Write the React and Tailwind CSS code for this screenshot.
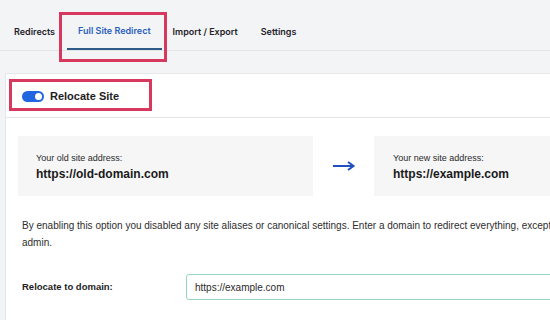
import React from "react";

export default function App() {
  const font = { fontFamily: "'Liberation Sans', Arial, sans-serif" };
  const tabFont = { fontFamily: "Inter, 'Liberation Sans', Arial, sans-serif" };
  return (
    <div className="relative w-[550px] h-[320px] overflow-hidden bg-[#f3f4f6] text-[#1e1e1e]" style={font}>
      {/* Tabs header */}
      <div className="h-[51px] border-b border-[#e4e5e7] flex items-end pl-[14px]" style={tabFont}>
        <div className="h-[50px] flex items-center pt-[14px] pr-[12px] text-[9px] font-semibold text-[#1f2328]">Redirects</div>
        <div className="h-[50px] flex flex-col items-center">
          <div className="flex-1 flex items-center pt-[14px] px-[11px] text-[9px] font-semibold text-[#2b5fbd]">Full Site Redirect</div>
          <div className="h-[2px] w-full bg-[#2d5a86]"></div>
        </div>
        <div className="h-[50px] flex items-center pt-[14px] pl-[11px] pr-[23px] text-[9px] font-semibold text-[#1f2328]">Import / Export</div>
        <div className="h-[50px] flex items-center pt-[14px] text-[9px] font-semibold text-[#1f2328]">Settings</div>
      </div>
      <div className="h-[22px]"></div>
      {/* Panel */}
      <div className="ml-[5px] bg-white border-l border-t border-[#e6e7e9] h-[260px]">
        <div className="h-[44px] border-b border-[#e6e7e9] flex items-center pl-[16px] gap-[6px]">
          <div className="w-[22px] h-[11px] rounded-full bg-[#2166e0] flex items-center justify-end pr-[2px] mt-[1px]">
            <div className="w-[7px] h-[7px] rounded-full bg-white"></div>
          </div>
          <div className="text-[11px] font-bold text-[#1d1d1f] mt-[1px]">Relocate Site</div>
        </div>
        <div className="pl-[12px] pt-[18px]">
          <div className="flex items-center">
            <div className="shrink-0 w-[295px] h-[60px] bg-[#f6f6f7] flex flex-col justify-center pl-[18px] pt-[2px]">
              <div className="text-[9px] text-[#2a2a2a] leading-[12px]">Your old site address:</div>
              <div className="text-[12px] font-bold text-[#1a1a1a] leading-[18px] mt-[1px]">https://old-domain.com</div>
            </div>
            <div className="shrink-0 w-[61px] flex justify-center">
              <svg width="24" height="10" viewBox="0 0 24 10">
                <path d="M1 5 H20" stroke="#1f4fc0" strokeWidth="2" />
                <path d="M16 1 L21.5 5 L16 9" stroke="#1f4fc0" strokeWidth="2" fill="none" />
              </svg>
            </div>
            <div className="shrink-0 w-[200px] h-[60px] bg-[#f6f6f7] flex flex-col justify-center pl-[19px] pt-[2px]">
              <div className="text-[9px] text-[#2a2a2a] leading-[12px]">Your new site address:</div>
              <div className="text-[12px] font-bold text-[#1a1a1a] leading-[18px] mt-[1px] whitespace-nowrap">https://example.com</div>
            </div>
          </div>
          <div className="mt-[21px] pl-[4px] text-[10px] leading-[17px] text-[#2d2d2d] whitespace-nowrap">
            <div>By enabling this option you disabled any site aliases or canonical settings. Enter a domain to redirect everything, except the</div>
            <div>admin.</div>
          </div>
          <div className="mt-[23px] pl-[4px] flex items-center">
            <div className="shrink-0 w-[164px] text-[9.5px] font-bold text-[#1d1d1f]">Relocate to domain:</div>
            <div className="shrink-0 w-[380px] h-[26px] border border-[#94d6c2] rounded-[3px] flex items-center pl-[8px] text-[10px] text-[#2a2a2a]">https://example.com</div>
          </div>
        </div>
      </div>
      {/* Annotation boxes */}
      <div className="absolute left-[59px] top-[12px] w-[108px] h-[50px] border-[3px] border-[#d6395d]"></div>
      <div className="absolute left-[9px] top-[79px] w-[143px] h-[32px] border-[3px] border-[#d6395d]"></div>
    </div>
  );
}
